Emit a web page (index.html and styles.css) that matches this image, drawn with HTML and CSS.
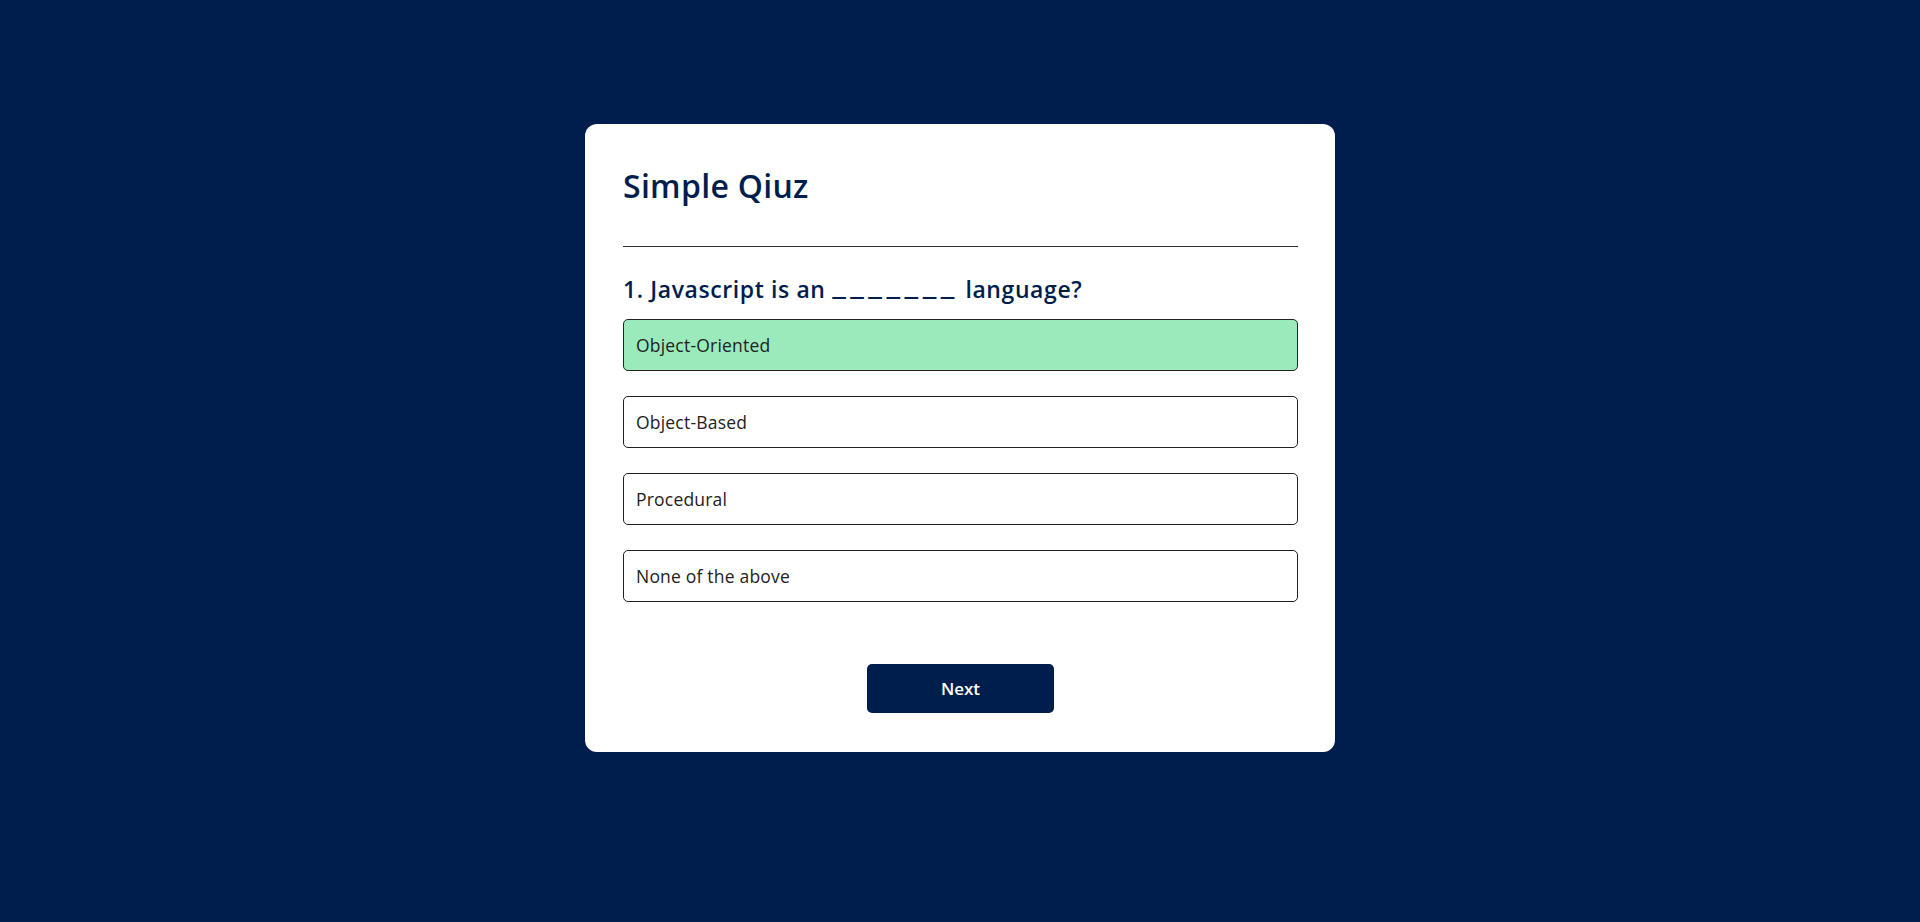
FILE: index.html
```html
<!DOCTYPE html>
<html lang="en">
<head>
<meta charset="UTF-8">
<title>Simple Qiuz</title>
<link rel="stylesheet" href="styles.css">
</head>
<body>
<div class="app">
  <h1 class="title">Simple Qiuz</h1>
  <div class="quiz">
    <h2 class="question">1. Javascript is an <span class="blank">_______</span> language?</h2>
    <div class="answers">
      <button class="btn correct">Object-Oriented</button>
      <button class="btn">Object-Based</button>
      <button class="btn">Procedural</button>
      <button class="btn">None of the above</button>
    </div>
    <button class="next-btn">Next</button>
  </div>
</div>
</body>
</html>
```
FILE: styles.css
```css
* {
  margin: 0;
  padding: 0;
  box-sizing: border-box;
  font-family: "Open Sans", "Liberation Sans", sans-serif;
}

body {
  background: #001e4d;
  min-height: 922px;
}

.app {
  background: #fff;
  width: 750px;
  margin: 124px auto 0;
  border-radius: 12px;
  padding: 38px 37px 39px 38px;
}

.title {
  font-size: 32px;
  line-height: 47px;
  letter-spacing: 0.3px;
  color: #001e4d;
  font-weight: 600;
  border-bottom: 1px solid #333;
  padding-bottom: 37px;
}

.quiz {
  padding-top: 25px;
  display: flex;
  flex-direction: column;
}

.question {
  font-size: 23px;
  line-height: 34px;
  letter-spacing: 0.6px;
  color: #001e4d;
  font-weight: 600;
}

.blank {
  font-size: 32px;
  line-height: 0;
  letter-spacing: 4.5px;
  vertical-align: 4px;
}

.answers {
  margin-top: 13px;
  display: flex;
  flex-direction: column;
  gap: 25px;
}

.btn {
  background: #fff;
  color: #222;
  font-size: 17.5px;
  letter-spacing: 0.2px;
  font-weight: 500;
  width: 100%;
  height: 52px;
  border: 1px solid #222;
  border-radius: 5px;
  padding: 0 12px;
  text-align: left;
  cursor: pointer;
}

.btn.correct {
  background: #9aeabc;
}

.next-btn {
  align-self: center;
  background: #001e4d;
  color: #fff;
  font-size: 17px;
  font-weight: 600;
  width: 187px;
  height: 49px;
  margin-top: 62px;
  border: 0;
  border-radius: 5px;
  cursor: pointer;
}
```
